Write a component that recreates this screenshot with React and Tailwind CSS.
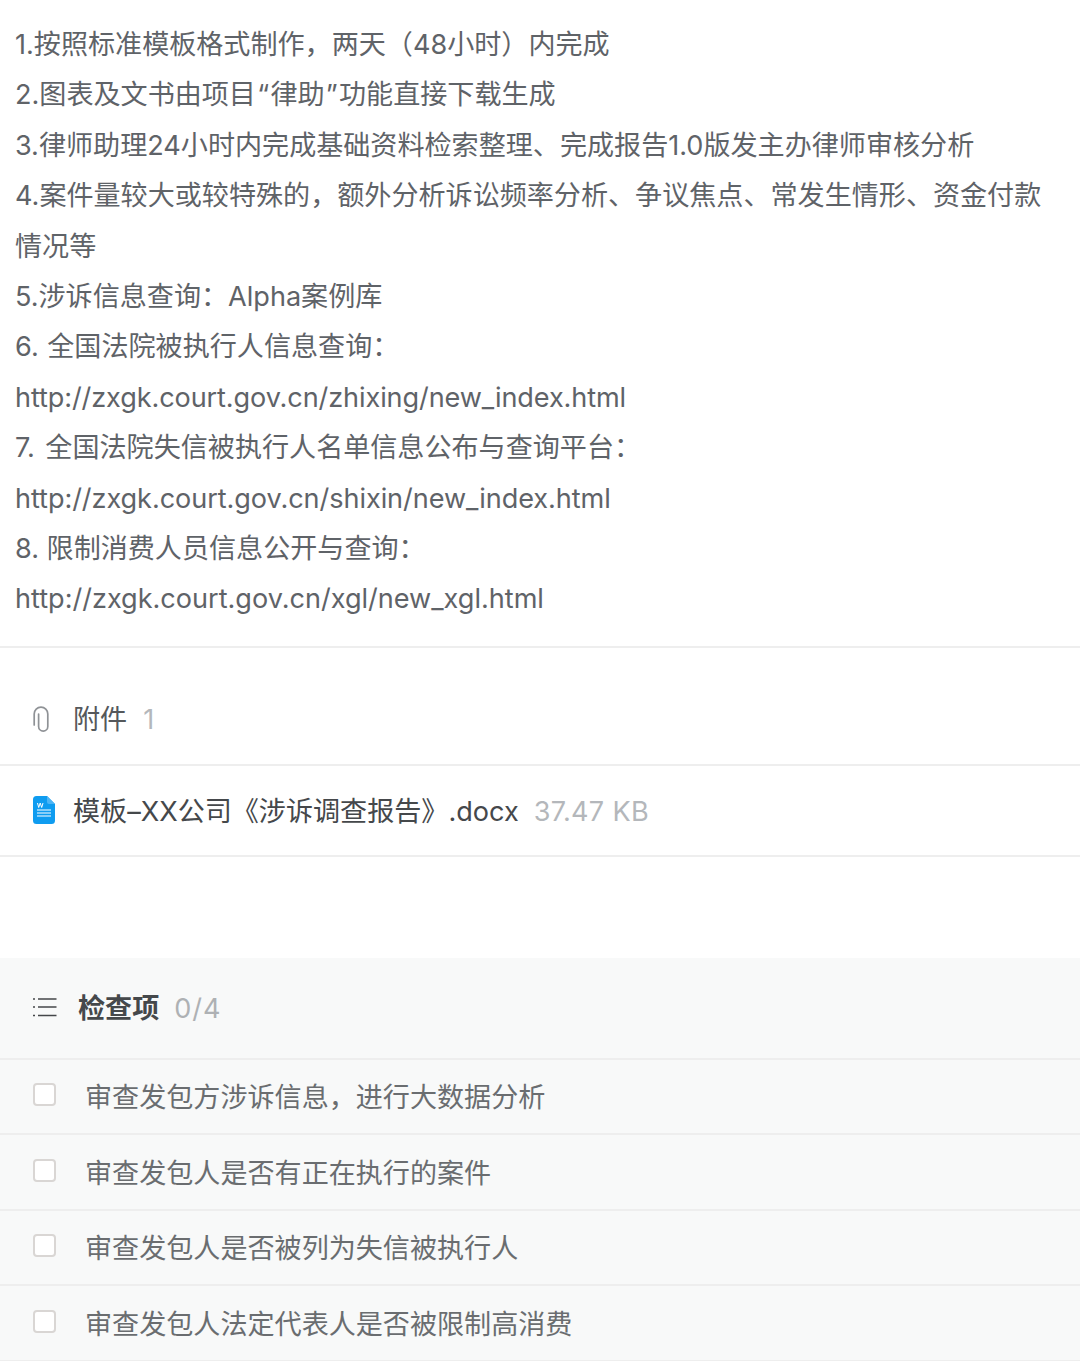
import React from "react";

const font = "font-['Inter','Noto_Sans_CJK_SC',sans-serif]";

const checks = [
  "审查发包方涉诉信息，进行大数据分析",
  "审查发包人是否有正在执行的案件",
  "审查发包人是否被列为失信被执行人",
  "审查发包人法定代表人是否被限制高消费",
];

const Clip = () => (
  <svg width="16" height="27" viewBox="0 0 16 27" fill="none" stroke="#8f9296" strokeWidth="1.700" strokeLinecap="round">
    <path d="M1.200 19V8a6.800 6.800 0 0 1 13.600 0v12.500a4.600 4.600 0 0 1-9.200 0V8" />
  </svg>
);

const DocIcon = () => (
  <svg width="22" height="28" viewBox="0 0 22 28">
    <path d="M3.500 0H14l8 8v16.500a3.500 3.500 0 0 1-3.500 3.500h-15A3.500 3.500 0 0 1 0 24.500v-21A3.500 3.500 0 0 1 3.500 0z" fill="#0f9cf0" />
    <path d="M14 0l8 8h-6a2 2 0 0 1-2-2z" fill="#4db5f5" />
    <path d="M4.500 7l1.200 4.500L7.200 7l1.500 4.500L10 7" fill="none" stroke="#fff" strokeWidth="1" />
    <path d="M4 14h14M4 17h14M4 20h14" stroke="#fff" strokeWidth="1.200" />
  </svg>
);

const ListIcon = () => (
  <svg width="24" height="20" viewBox="0 0 24 20" fill="none" stroke="#44474a" strokeWidth="1.700">
    <path d="M5 2h18.500M5 10h18.500M5 18.500h18.500" />
    <path d="M0 2h2M0 10h2M0 18.500h2" />
  </svg>
);

export default function App() {
  return (
    <div className={`${font} w-[1080px] h-[1361px] overflow-hidden bg-white text-[27.08px] leading-[50.4px]`}>
      <div className="pl-[15px] pr-4 pt-5 pb-[21px] text-[#5f6368] border-b-2 border-[#eeeeee]">
        <p>1.按照标准模板格式制作，两天（48小时）内完成</p>
        <p>2.图表及文书由项目<span className="px-[1.250px]">“</span>律助<span className="px-[1.250px]">”</span>功能直接下载生成</p>
        <p>3.律师助理24小时内完成基础资料检索整理、完成报告1.0版发主办律师审核分析</p>
        <p>4.案件量较大或较特殊的，额外分析诉讼频率分析、争议焦点、常发生情形、资金付款情况等</p>
        <p>5.涉诉信息查询：Alpha案例库</p>
        <p className="[word-spacing:1px]">6. 全国法院被执行人信息查询：</p>
        <p className="tracking-[-0.1px]">http://zxgk.court.gov.cn/zhixing/new_index.html</p>
        <p className="[word-spacing:3px]">7. 全国法院失信被执行人名单信息公布与查询平台：</p>
        <p className="tracking-[-0.06px]">http://zxgk.court.gov.cn/shixin/new_index.html</p>
        <p>8. 限制消费人员信息公开与查询：</p>
        <p>http://zxgk.court.gov.cn/xgl/new_xgl.html</p>
      </div>

      <div className="h-[118px] pl-[33px] pt-[29px] flex items-center border-b-2 border-[#eeeeee]">
        <div className="w-10 mb-[2px] flex"><Clip /></div>
        <span className="text-[#55585b]">附件</span>
        <span className="ml-4 text-[#b4b7bb]">1</span>
      </div>

      <div className="h-[91px] pl-[33px] flex items-center border-b-2 border-[#eeeeee]">
        <div className="w-10 flex"><DocIcon /></div>
        <span className="mt-1 text-[#45484b]">模板–XX公司《涉诉调查报告》.docx</span>
        <span className="mt-1 ml-[15px] tracking-[0.3px] text-[#b4b7bb]">37.47 KB</span>
      </div>

      <div className="mt-[101px] bg-[#f8f9f9]">
        <div className="h-[102px] pl-[33px] pt-[3px] flex items-center border-b-2 border-[#eeeeee]">
          <div className="w-[45px] mb-1 flex"><ListIcon /></div>
          <span className="font-bold text-[#45484b]">检查项</span>
          <span className="ml-[15px] tracking-[1px] text-[#aeb1b4]">0/4</span>
        </div>
        {checks.map((c) => (
          <div key={c} className="h-[75.5px] pl-[33px] flex items-center border-b-2 border-[#eeeeee]">
            <div className="w-[23px] h-[23px] mb-1 rounded-[4px] border-2 border-[#d9d6d4] bg-white" />
            <span className="ml-[29px] mt-1 text-[#6a6d70]">{c}</span>
          </div>
        ))}
      </div>
    </div>
  );
}
